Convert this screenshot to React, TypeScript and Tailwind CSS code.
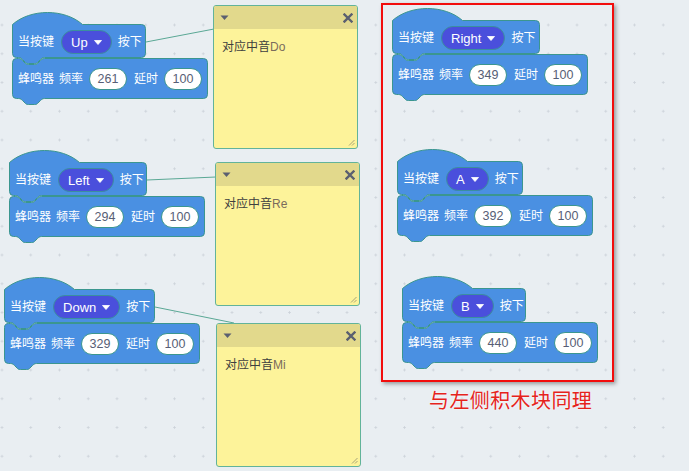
import React from "react";

const FONT = "font-['Liberation_Sans','Noto_Sans_CJK_SC',sans-serif]";
const FILL = "#4a90e2";
const STROKE = "#3b968f";

function hatPath(W: number) {
  const A = 12;
  const H = 34;
  return `M0.5 ${A + 0.5} c18 -16 52 -16 70 0 L${W - 4.5} ${A + 0.5} a4 4 0 0 1 4 4 L${W - 0.5} ${A + H - 4.5} a4 4 0 0 1 -4 4 L32.5 ${A + H - 0.5} c-2 0 -3 1 -4 2 l-3 3 c-1 1 -2 1 -3 1 h-6 c-1 0 -2 0 -3 -1 l-3 -3 c-1 -1 -2 -2 -4 -2 L4.5 ${A + H - 0.5} a4 4 0 0 1 -4 -4 Z`;
}

function stackPath(W: number) {
  const H = 41;
  return `M0.5 4.5 a4 4 0 0 1 4 -4 L6.5 0.5 c2 0 3 1 4 2 l3 3 c1 1 2 1 3 1 h6 c1 0 2 0 3 -1 l3 -3 c1 -1 2 -2 4 -2 L${W - 4.5} 0.5 a4 4 0 0 1 4 4 L${W - 0.5} ${H - 4.5} a4 4 0 0 1 -4 4 L32.5 ${H - 0.5} c-2 0 -3 1 -4 2 l-3 3 c-1 1 -2 1 -3 1 h-6 c-1 0 -2 0 -3 -1 l-3 -3 c-1 -1 -2 -2 -4 -2 L4.5 ${H - 0.5} a4 4 0 0 1 -4 -4 Z`;
}

function Caret() {
  return (
    <svg width="8" height="5" viewBox="0 0 8 5" className="block">
      <path d="M0.5 0.5 H7.5 L4 4.5 Z" fill="#fff" stroke="#fff" strokeWidth="0.8" strokeLinejoin="round" />
    </svg>
  );
}

function NumPill({ v }: { v: string }) {
  return (
    <div className="h-[22px] w-[38px] rounded-full bg-white border border-[#3b968f] flex items-center justify-center text-[12.5px] text-[#575e75] leading-none">
      {v}
    </div>
  );
}

type BlockProps = { x: number; y: number; hatW: number; keyName: string; freq: string };

function Block({ x, y, hatW, keyName, freq }: BlockProps) {
  const stackW = 196;
  return (
    <div className={`absolute flex flex-col ${FONT}`} style={{ left: x, top: y - 12 }}>
      <div className="relative h-[46px]" style={{ width: hatW }}>
        <svg className="absolute left-0 top-0 overflow-visible" width={hatW} height={54}>
          <path d={hatPath(hatW)} fill={FILL} stroke={STROKE} strokeWidth="1" />
        </svg>
        <div className="relative pt-[18px] pl-[6px] flex items-center h-[42px] text-white text-[12px] leading-none">
          <span>当按键</span>
          <div className="ml-[7px] h-[24px] rounded-full bg-[#4a4fdc] border border-[#3b8f9f] flex items-center gap-[6px] px-[9px] text-[13px] text-white">
            <span>{keyName}</span>
            <Caret />
          </div>
          <span className="ml-[6px]">按下</span>
        </div>
      </div>
      <div className="relative h-[41px]" style={{ width: stackW }}>
        <svg className="absolute left-0 top-0 overflow-visible" width={stackW} height={48}>
          <path d={stackPath(stackW)} fill={FILL} stroke={STROKE} strokeWidth="1" />
        </svg>
        <div className="relative pt-[10px] pl-[6px] flex items-center h-[32px] text-white text-[12px] leading-none">
          <span>蜂鸣器</span>
          <span className="ml-[5px]">频率</span>
          <div className="ml-[6px]">
            <NumPill v={freq} />
          </div>
          <span className="ml-[7px]">延时</span>
          <div className="ml-[6px]">
            <NumPill v="100" />
          </div>
        </div>
      </div>
    </div>
  );
}

type NoteProps = { x: number; y: number; latin: string };

function Note({ x, y, latin }: NoteProps) {
  return (
    <div
      className={`absolute w-[145px] h-[144px] rounded-[3px] border border-[#62b39a] bg-[#fdf39a] overflow-hidden flex flex-col ${FONT}`}
      style={{ left: x, top: y }}
    >
      <div className="h-[23px] bg-[#e2d98c] flex items-center justify-between pl-[6px] pr-[4px]">
        <svg width="9" height="6" viewBox="0 0 9 6">
          <path d="M0.5 0.5 H8.5 L4.5 5 Z" fill="#5a5f70" />
        </svg>
        <svg width="10" height="10" viewBox="0 0 10 10">
          <path d="M1.5 1.5 L8.5 8.5 M8.5 1.5 L1.5 8.5" stroke="#5a5f70" strokeWidth="2.4" strokeLinecap="square" />
        </svg>
      </div>
      <div className="relative flex-1 pt-[11px] pl-[8px] text-[12px] leading-[14px] text-[#3f3f3f]">
        <span>对应中音</span>
        <span className="text-[#7a6b5c]">{latin}</span>
        <svg className="absolute right-[2px] bottom-[2px]" width="7" height="7" viewBox="0 0 7 7">
          <path d="M1 6.5 L6.5 1 M4 6.5 L6.5 4" stroke="#a6a37a" strokeWidth="1" />
        </svg>
      </div>
    </div>
  );
}

export default function App() {
  return (
    <div className="relative w-[689px] h-[471px] overflow-hidden bg-[#e9eef2] bg-[radial-gradient(circle,#cdd3da_0.9px,transparent_1.3px)] bg-[length:28.75px_28.75px] bg-[position:-12.375px_10.625px]">
      <svg className="absolute left-0 top-0" width="689" height="471">
        <line x1="146" y1="42" x2="214" y2="29" stroke="#5aa895" strokeWidth="1" />
        <line x1="147" y1="180" x2="216" y2="177" stroke="#5aa895" strokeWidth="1" />
        <line x1="155" y1="307" x2="234" y2="323" stroke="#5aa895" strokeWidth="1" />
      </svg>

      <Note x={213} y={5} latin="Do" />
      <Note x={215} y={162} latin="Re" />
      <Note x={216} y={323} latin="Mi" />

      <Block x={12} y={24} hatW={134} keyName="Up" freq="261" />
      <Block x={9} y={162} hatW={138} keyName="Left" freq="294" />
      <Block x={4} y={289} hatW={151} keyName="Down" freq="329" />

      <div className="absolute left-[381px] top-[3px] w-[233px] h-[379px] border-2 border-[#f20d0d] shadow-[2px_2px_4px_rgba(0,0,0,0.35)]" />

      <Block x={392} y={20} hatW={148} keyName="Right" freq="349" />
      <Block x={397} y={161} hatW={126} keyName="A" freq="392" />
      <Block x={402} y={288} hatW={124} keyName="B" freq="440" />

      <div className="absolute left-[429px] top-[388px] text-[20px] leading-[24px] tracking-[0.4px] text-[#e5231c] font-['Noto_Sans_CJK_SC',sans-serif] [text-shadow:0_0_2px_#fff]">
        与左侧积木块同理
      </div>
    </div>
  );
}
